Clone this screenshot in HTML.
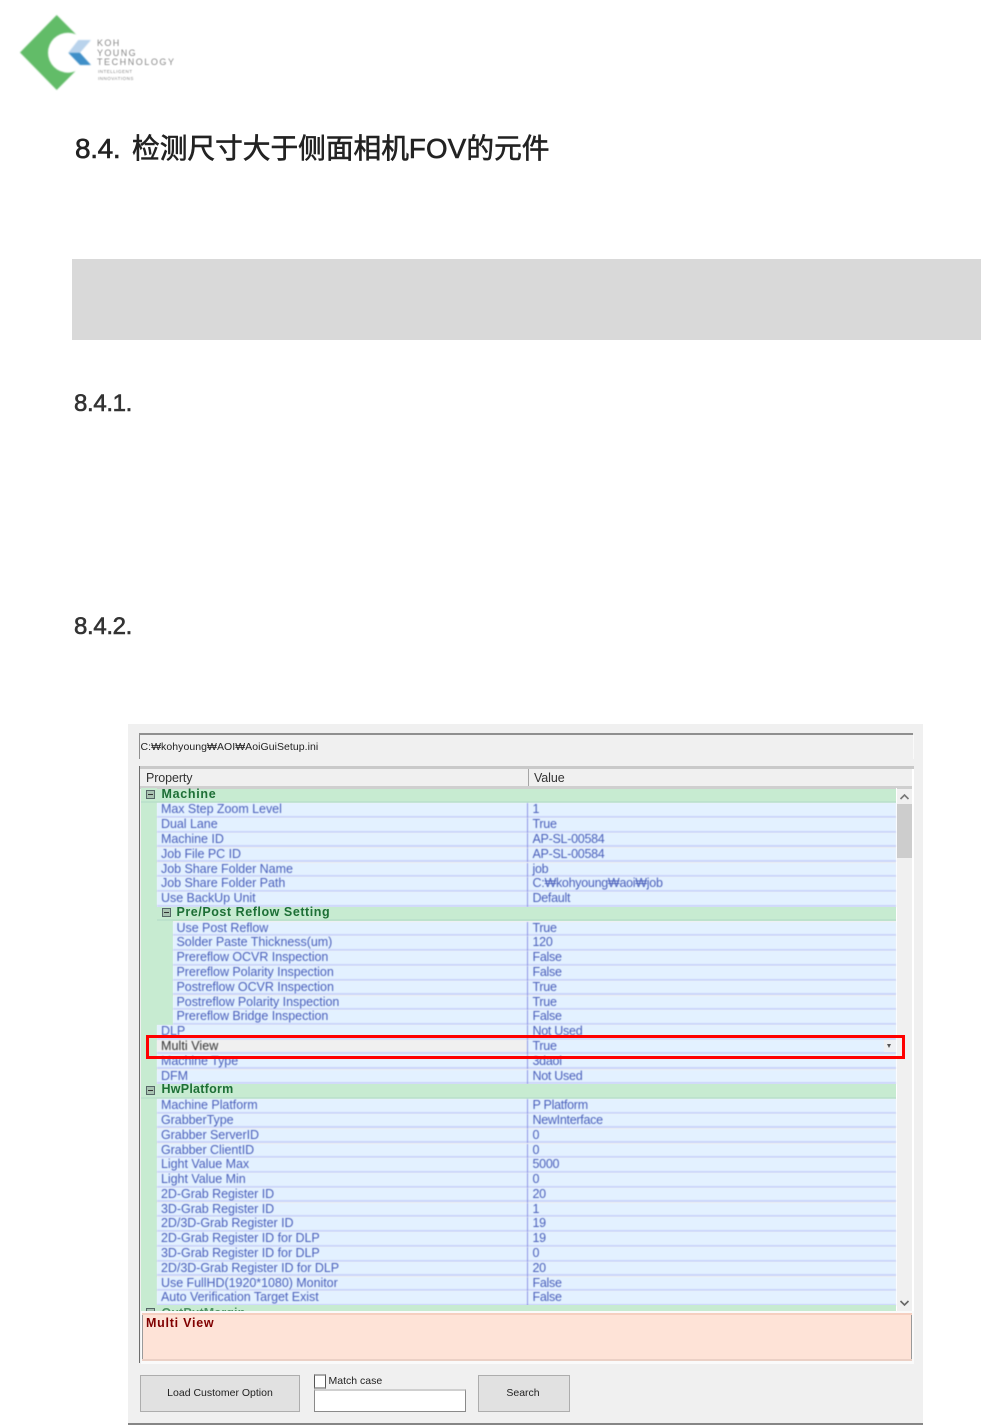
<!DOCTYPE html>
<html><head><meta charset="utf-8"><style>
html,body{margin:0;padding:0;background:#fff}
#p{position:relative;width:981px;height:1425px;overflow:hidden;background:#fff;font-family:"Liberation Sans","Noto Sans CJK SC",sans-serif}
#p div,#p span,#p svg{position:absolute}
.r{left:157px;width:739px;height:12.5px;background:#e3f1ff;border-bottom:2.29px solid #cad4fa;font-size:12.5px;line-height:12px;color:#4a5fbb;letter-spacing:-.04px;white-space:nowrap;filter:blur(.4px)}
.n{left:173px;width:723px}
.r span{left:4px;top:0}
.n span{left:3.5px}
.r i+span{left:375.5px;top:0;letter-spacing:-.28px}
.r i{position:absolute;left:370px;top:0;width:1px;height:14.8px;background:#8f97e6}
.n i+span{left:359.5px}
.n i{left:354px}
.g{left:141px;width:755px;height:12.5px;background:#c7ebd1;border-bottom:2.29px solid #bce2cc;font:bold 12.5px/12px "Liberation Sans",sans-serif;color:#1d6f36;letter-spacing:.55px;white-space:nowrap;filter:blur(.3px)}
.g span{left:20.5px;top:-1px}
.g b{position:absolute;left:4.5px;top:1.5px;width:7px;height:7px;border:1px solid #566;background:#a9c4b2}
.g b:after{content:"";position:absolute;left:1px;top:3px;width:5px;height:1px;background:#333}
.t{filter:blur(.3px);white-space:nowrap}
.h{-webkit-text-stroke:.6px currentColor}
</style></head><body><div id="p">

<svg style="left:0;top:0;filter:blur(.7px)" width="100" height="100" viewBox="0 0 100 100">
<polygon points="20,52.5 56.7,15 94,52.5 56.7,90" fill="#62bc68"/>
<circle cx="68" cy="52.7" r="20" fill="#fff"/>
<rect x="78" y="20" width="22" height="65" fill="#fff"/>
<polygon points="78.3,40 91,40 80,52.7 68.3,52.7" fill="#b9d3ec"/>
<polygon points="68.3,52.7 80,52.7 91,65 80,65" fill="#3f8fc8"/>
</svg>
<div class="t" style="left:97px;top:37.5px;font-size:9px;line-height:10px;color:#888;letter-spacing:1.4px;filter:blur(.6px)">KOH</div>
<div class="t" style="left:97px;top:47.5px;font-size:9px;line-height:10px;color:#888;letter-spacing:1.4px;filter:blur(.6px)">YOUNG</div>
<div class="t" style="left:97px;top:57px;font-size:9px;line-height:10px;color:#888;letter-spacing:1.55px;filter:blur(.6px)">TECHNOLOGY</div>
<div class="t" style="left:98px;top:69px;font-size:4.5px;line-height:5px;color:#888;letter-spacing:.5px;filter:blur(.5px)">INTELLIGENT</div>
<div class="t" style="left:98px;top:76px;font-size:4.5px;line-height:5px;color:#888;letter-spacing:.5px;filter:blur(.5px)">INNOVATIONS</div>

<div class="t h" style="left:75px;top:132px;font-size:28px;line-height:34px;color:#222;letter-spacing:-.35px">8.4.</div>
<div class="t h" style="left:132px;top:132px;font-size:27.7px;line-height:34px;color:#222">检测尺寸大于侧面相机<span style="position:static;letter-spacing:.2px">FOV</span>的元件</div>

<div style="left:72px;top:259px;width:909px;height:81px;background:#d9d9d9"></div>

<div class="t h" style="left:74px;top:389px;font-size:24px;line-height:30px;color:#333;letter-spacing:-.35px">8.4.1.</div>
<div class="t h" style="left:74px;top:612px;font-size:24px;line-height:30px;color:#333;letter-spacing:-.35px">8.4.2.</div>

<div style="left:128px;top:724px;width:795px;height:699px;background:#f0f0f0"></div>
<div style="left:128px;top:1423px;width:795px;height:2px;background:#868686"></div>

<div style="left:139px;top:733px;width:774px;height:2px;background:#8f8f8f"></div>
<div style="left:139px;top:733px;width:1px;height:26px;background:#8f8f8f"></div>
<div style="left:913px;top:735px;width:1px;height:24px;background:#fafafa"></div>
<div class="t" style="left:140.5px;top:741px;font-size:10.5px;line-height:13px;color:#222;letter-spacing:.05px">C:₩kohyoung₩AOI₩AoiGuiSetup.ini</div>

<div style="left:139px;top:766px;width:775px;height:3px;background:#c9c9c9"></div>
<div style="left:139px;top:766px;width:1px;height:597px;background:#6e6e6e"></div>
<div style="left:140px;top:786px;width:774px;height:2.5px;background:#cfcfcf"></div>
<div style="left:528px;top:769px;width:1px;height:17px;background:#a5a5a5"></div>
<div class="t" style="left:146px;top:771px;font-size:12.5px;line-height:14px;color:#333;letter-spacing:-.1px">Property</div>
<div class="t" style="left:534px;top:771px;font-size:12.5px;line-height:14px;color:#333;letter-spacing:-.1px">Value</div>

<div style="left:141px;top:788px;width:16px;height:523px;background:#c7ebd1"></div>
<div style="left:157px;top:919px;width:16px;height:106px;background:#c7ebd1"></div>
<div style="left:896px;top:788px;width:1px;height:525px;background:#fff"></div>
<div style="left:897px;top:804px;width:15px;height:54px;background:#cdcdcd"></div>
<div style="left:912px;top:769px;width:2px;height:595px;background:#fff"></div>
<svg style="left:899px;top:792px" width="11" height="10" viewBox="0 0 11 10"><path d="M1.5 7 L5.5 3 L9.5 7" fill="none" stroke="#777" stroke-width="1.6"/></svg>
<svg style="left:899px;top:1298px" width="11" height="10" viewBox="0 0 11 10"><path d="M1.5 3 L5.5 7 L9.5 3" fill="none" stroke="#666" stroke-width="1.6"/></svg>

<div class="g" style="top:788.5px"><b></b><span style="letter-spacing:.7px">Machine</span></div>
<div class="r" style="top:803.3px"><span>Max Step Zoom Level</span><i></i><span>1</span></div>
<div class="r" style="top:818.1px"><span>Dual Lane</span><i></i><span>True</span></div>
<div class="r" style="top:832.9px"><span>Machine ID</span><i></i><span>AP-SL-00584</span></div>
<div class="r" style="top:847.7px"><span>Job File PC ID</span><i></i><span>AP-SL-00584</span></div>
<div class="r" style="top:862.5px"><span>Job Share Folder Name</span><i></i><span>job</span></div>
<div class="r" style="top:877.2px"><span>Job Share Folder Path</span><i></i><span>C:₩kohyoung₩aoi₩job</span></div>
<div class="r" style="top:892px"><span>Use BackUp Unit</span><i></i><span>Default</span></div>
<div class="g" style="top:906.8px;left:157px;width:739px"><b></b><span style="left:19.5px">Pre/Post Reflow Setting</span></div>
<div class="r n" style="top:921.6px"><span>Use Post Reflow</span><i></i><span>True</span></div>
<div class="r n" style="top:936.4px"><span>Solder Paste Thickness(um)</span><i></i><span>120</span></div>
<div class="r n" style="top:951.2px"><span>Prereflow OCVR Inspection</span><i></i><span>False</span></div>
<div class="r n" style="top:966px"><span>Prereflow Polarity Inspection</span><i></i><span>False</span></div>
<div class="r n" style="top:980.8px"><span>Postreflow OCVR Inspection</span><i></i><span>True</span></div>
<div class="r n" style="top:995.6px"><span>Postreflow Polarity Inspection</span><i></i><span>True</span></div>
<div class="r n" style="top:1010.4px"><span>Prereflow Bridge Inspection</span><i></i><span>False</span></div>
<div class="r" style="top:1025.1px"><span>DLP</span><i></i><span>Not Used</span></div>
<div class="r" style="top:1039.9px;color:#333"><div style="left:0;top:0;width:370px;height:12.5px;background:#f0f0f0"></div><span style="letter-spacing:.06px">Multi View</span><i></i><span style="color:#4a5fbb">True</span></div>
<div class="r" style="top:1054.7px"><span>Machine Type</span><i></i><span>3daoi</span></div>
<div class="r" style="top:1069.5px"><span>DFM</span><i></i><span>Not Used</span></div>
<div class="g" style="top:1084.3px"><b></b><span style="letter-spacing:.25px">HwPlatform</span></div>
<div class="r" style="top:1099.1px"><span>Machine Platform</span><i></i><span>P Platform</span></div>
<div class="r" style="top:1113.9px"><span>GrabberType</span><i></i><span>NewInterface</span></div>
<div class="r" style="top:1128.7px"><span>Grabber ServerID</span><i></i><span>0</span></div>
<div class="r" style="top:1143.5px"><span>Grabber ClientID</span><i></i><span>0</span></div>
<div class="r" style="top:1158.3px"><span>Light Value Max</span><i></i><span>5000</span></div>
<div class="r" style="top:1173px"><span>Light Value Min</span><i></i><span>0</span></div>
<div class="r" style="top:1187.8px"><span>2D-Grab Register ID</span><i></i><span>20</span></div>
<div class="r" style="top:1202.6px"><span>3D-Grab Register ID</span><i></i><span>1</span></div>
<div class="r" style="top:1217.4px"><span>2D/3D-Grab Register ID</span><i></i><span>19</span></div>
<div class="r" style="top:1232.2px"><span>2D-Grab Register ID for DLP</span><i></i><span>19</span></div>
<div class="r" style="top:1247px"><span>3D-Grab Register ID for DLP</span><i></i><span>0</span></div>
<div class="r" style="top:1261.8px"><span>2D/3D-Grab Register ID for DLP</span><i></i><span>20</span></div>
<div class="r" style="top:1276.6px"><span>Use FullHD(1920*1080) Monitor</span><i></i><span>False</span></div>
<div class="r" style="top:1291.4px"><span>Auto Verification Target Exist</span><i></i><span>False</span></div>
<div class="g" style="top:1304.5px;height:6.5px;border:0;overflow:hidden"><b style="top:3.5px"></b><span style="top:2px;letter-spacing:.1px;opacity:.7">OutPutMargin</span></div>

<div style="left:884px;top:1040px;width:12px;height:12px;background:#eef0f3"></div>
<div style="left:887px;top:1044px;width:0;height:0;border-left:2.5px solid transparent;border-right:2.5px solid transparent;border-top:4px solid #555"></div>

<div style="left:146px;top:1034.5px;width:753px;height:18px;border:3px solid #ff0000"></div>

<div style="left:141px;top:1311px;width:773px;height:53px;background:#fafafa"></div>
<div style="left:142px;top:1313px;width:770px;height:48px;background:#fee3d7"></div>
<div style="left:142px;top:1314px;width:1px;height:47px;background:#9a9a9a"></div>
<div style="left:911px;top:1315px;width:1px;height:46px;background:#9a9a9a"></div>
<div style="left:142px;top:1313px;width:770px;height:2px;background:#f5cfc0"></div>
<div style="left:142px;top:1359px;width:770px;height:2px;background:#ebd0c5"></div>
<div class="t" style="left:146px;top:1317px;font:bold 12.5px/13px 'Liberation Sans',sans-serif;color:#800000;letter-spacing:.75px">Multi View</div>

<div style="left:140px;top:1375px;width:158px;height:35px;background:#e1e1e1;border:1px solid #adadad"></div>
<div class="t" style="left:140px;top:1386px;width:160px;text-align:center;font-size:10.5px;line-height:14px;color:#222;letter-spacing:0">Load Customer Option</div>
<div style="left:314px;top:1374px;width:10px;height:11px;background:#fff;border:1px solid #555;border-top:2px solid #aaa;border-bottom:2px solid #aaa"></div>
<div class="t" style="left:328.5px;top:1374px;font-size:10.5px;line-height:14px;color:#222;letter-spacing:0">Match case</div>
<div style="left:314px;top:1389px;width:150px;height:20px;background:#fff;border:1px solid #8a8a8a;border-top:2px solid #cfcfcf"></div>
<div style="left:478px;top:1375px;width:90px;height:35px;background:#e1e1e1;border:1px solid #adadad"></div>
<div class="t" style="left:477px;top:1386px;width:92px;text-align:center;font-size:10.5px;line-height:14px;color:#222;letter-spacing:0">Search</div>

</div></body></html>
